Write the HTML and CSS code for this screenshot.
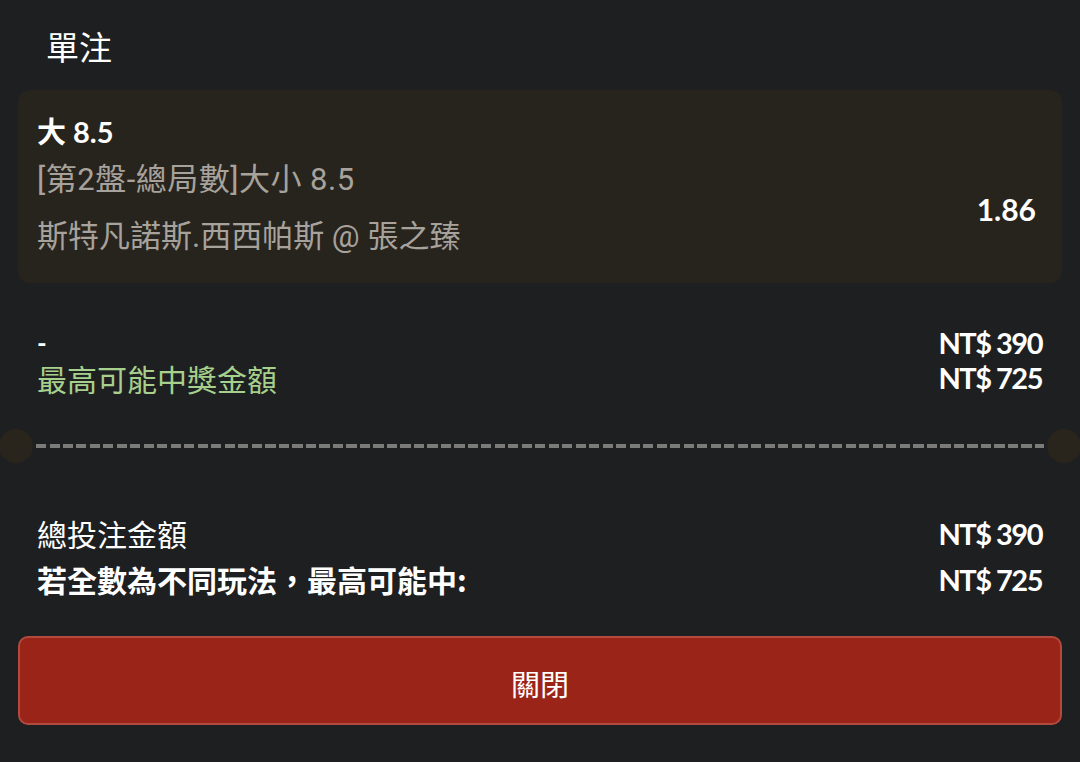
FILE: index.html
```html
<!DOCTYPE html>
<html lang="zh-Hant">
<head>
<meta charset="utf-8">
<title>單注</title>
<link rel="stylesheet" href="styles.css">
</head>
<body>
<div class="sheet">
  <div class="title">單注</div>
  <div class="card">
    <div class="pick">大 8.5</div>
    <div class="market">[第2盤-總局數]大小 8.5</div>
    <div class="event">斯特凡諾斯.西西帕斯 @ 張之臻</div>
    <div class="odds">1.86</div>
  </div>
  <div class="rows rows-top">
    <div class="row">
      <span class="dash">-</span>
      <span class="amt">NT$ 390</span>
    </div>
    <div class="row">
      <span class="green">最高可能中獎金額</span>
      <span class="amt">NT$ 725</span>
    </div>
  </div>
  <div class="divider">
    <span class="notch notch-l"></span>
    <span class="dashes"></span>
    <span class="notch notch-r"></span>
  </div>
  <div class="rows rows-bottom">
    <div class="row">
      <span class="label">總投注金額</span>
      <span class="amt">NT$ 390</span>
    </div>
    <div class="row">
      <span class="label strong">若全數為不同玩法，最高可能中:</span>
      <span class="amt">NT$ 725</span>
    </div>
  </div>
  <div class="btn-wrap">
    <button class="close-btn">關閉</button>
  </div>
</div>
</body>
</html>
```

FILE: styles.css
```css
* { box-sizing: border-box; }
html, body {
  margin: 0;
  padding: 0;
  background: #1e1f21;
}
body {
  width: 1080px;
  height: 762px;
  overflow: hidden;
  color: #ffffff;
  font-family: Lato, "Noto Sans CJK TC", sans-serif;
}
.sheet {
  display: flex;
  flex-direction: column;
}
.title {
  font-family: "Noto Sans CJK TC", sans-serif;
  font-size: 33px;
  line-height: 44px;
  padding: 24px 46px 0;
  color: #ffffff;
}
.card {
  margin: 22px 18px 0;
  height: 193px;
  background: #27241e;
  border-radius: 12px;
  padding: 22px 26px 17px 19px;
  display: grid;
  grid-template-columns: 1fr auto;
  grid-template-rows: 40px 56px 58px;
}
.pick {
  grid-column: 1;
  grid-row: 1;
  font-family: Lato, "Noto Sans CJK TC", sans-serif;
  font-weight: 700;
  font-size: 29px;
  line-height: 40px;
}
.market, .event {
  grid-column: 1;
  font-family: Roboto, "Noto Sans CJK TC", sans-serif;
  font-size: 31px;
  color: #a7a29b;
}
.market { grid-row: 2; line-height: 56px; letter-spacing: 0.5px; }
.event { grid-row: 3; line-height: 58px; }
.odds {
  grid-column: 2;
  grid-row: 2 / 4;
  align-self: center;
  font-weight: 700;
  font-size: 30px;
  padding-top: 0;
}
.rows {
  display: flex;
  flex-direction: column;
  padding: 0 37px;
}
.rows-top { margin-top: 42px; }
.rows-top .row { height: 35px; }
.rows-bottom .row { height: 46px; }
.row {
  display: flex;
  justify-content: space-between;
  align-items: center;
  font-size: 30px;
}
.dash {
  font-weight: 700;
  font-size: 26px;
}
.green {
  font-family: "Noto Sans CJK TC", sans-serif;
  color: #a6d08c;
  font-size: 30px;
}
.label {
  font-family: "Noto Sans CJK TC", sans-serif;
  font-size: 30px;
}
.strong { font-weight: 700; }
.amt {
  font-family: Lato, sans-serif;
  font-weight: 700;
  font-size: 29px;
  letter-spacing: -1.5px;
  margin-right: 1px;
}
.divider {
  position: relative;
  margin: 49px 0 62px;
  height: 4px;
  padding: 0 36px;
  display: flex;
}
.dashes {
  flex: 1;
  height: 4px;
  background: repeating-linear-gradient(90deg, #7b7b79 0 10px, transparent 10px 13.5px);
}
.notch {
  position: absolute;
  top: -15px;
  width: 34px;
  height: 34px;
  border-radius: 50%;
  background: #29251d;
}
.notch-l { left: -1px; }
.notch-r { right: -1px; }
.btn-wrap {
  padding: 34px 18px 0;
}
.close-btn {
  width: 100%;
  height: 89px;
  background: #9a2418;
  border: 2px solid #b34a3f;
  border-radius: 10px;
  color: #ffffff;
  font-family: "Noto Sans CJK TC", sans-serif;
  font-size: 29px;
  padding: 0;
  padding-top: 4px;
}
```
